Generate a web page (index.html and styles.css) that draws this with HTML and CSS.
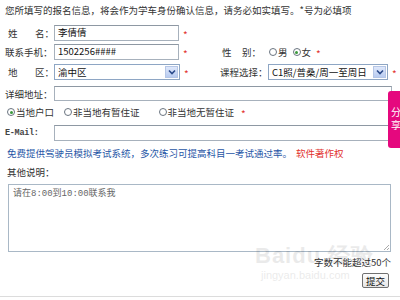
FILE: index.html
```html
<!DOCTYPE html>
<html>
<head>
<meta charset="utf-8">
<link rel="stylesheet" href="styles.css">
</head>
<body>
<div class="page">
  <div class="intro">您所填写的报名信息，将会作为学车身份确认信息，请务必如实填写。*号为必填项</div>

  <div class="row r1">
    <div class="cell left">
      <label class="lbl spread"><span>姓</span><span>名：</span></label>
      <div class="input w125">李倩倩</div><span class="star">*</span>
    </div>
  </div>

  <div class="row r2">
    <div class="cell left">
      <label class="lbl">联系手机：</label>
      <div class="input w125">1502256####</div><span class="star">*</span>
    </div>
    <div class="cell right">
      <label class="lbl spread"><span>性</span><span>别：</span></label>
      <span class="radio"></span><span class="rtxt">男</span>
      <span class="radio on"></span><span class="rtxt">女</span><span class="star">*</span>
    </div>
  </div>

  <div class="row r3">
    <div class="cell left">
      <label class="lbl spread"><span>地</span><span>区：</span></label>
      <div class="select w126"><span class="val">渝中区</span><span class="arrow"><svg width="8" height="6" viewBox="0 0 8 6"><path d="M1 1.5 L4 4.5 L7 1.5" fill="none" stroke="#2b4a8a" stroke-width="1.6"/></svg></span></div><span class="star">*</span>
    </div>
    <div class="cell right">
      <label class="lbl">课程选择：</label>
      <div class="select w120"><span class="val">C1照/普桑/周一至周日</span><span class="arrow"><svg width="8" height="6" viewBox="0 0 8 6"><path d="M1 1.5 L4 4.5 L7 1.5" fill="none" stroke="#2b4a8a" stroke-width="1.6"/></svg></span></div><span class="star">*</span>
    </div>
  </div>

  <div class="row r4">
    <label class="lbl">详细地址：</label>
    <div class="input wide"></div>
  </div>

  <div class="row r5">
    <span class="radio on"></span><span class="rtxt g1">当地户口</span>
    <span class="radio"></span><span class="rtxt g2">非当地有暂住证</span>
    <span class="radio"></span><span class="rtxt">非当地无暂住证</span><span class="star">*</span>
  </div>

  <div class="row r6">
    <label class="lbl mono">E-Mail:</label>
    <div class="input wide"></div>
  </div>

  <div class="row r7">
    <span class="blue">免费提供驾驶员模拟考试系统，多次练习可提高科目一考试通过率。</span><span class="red">软件著作权</span>
  </div>

  <div class="row r8">其他说明：</div>

  <div class="textarea">请在8:00到10:00联系我<span class="grip"></span></div>

  <div class="count">字数不能超过50个</div>

  <div class="btnrow"><button class="btn">提交</button></div>

  <div class="bottomline"></div>

  <div class="share">分<br>享</div>
  <div class="watermark"><span class="wm1">Bai<span class="du">du</span> 经验</span><span class="wm2">jingyan.baidu.com</span></div>
</div>
</body>
</html>
```

FILE: styles.css
```css
html, body {
  margin: 0;
  padding: 0;
  background: #fff;
}
.page {
  position: relative;
  width: 400px;
  height: 300px;
  overflow: hidden;
  font-family: "Noto Sans CJK SC", "Liberation Sans", sans-serif;
  font-size: 9.5px;
  color: #333;
  box-sizing: border-box;
  padding: 3px 0 0 5px;
}
.intro {
  height: 14px;
  line-height: 14px;
  white-space: nowrap;
}
.row {
  display: flex;
  align-items: center;
  white-space: nowrap;
}
.r1 { margin-top: 8px; height: 16px; }
.r2 { margin-top: 3px; height: 16px; }
.r3 { margin-top: 4px; height: 16px; }
.r4 { margin-top: 6px; height: 15px; }
.r5 { margin-top: 4px; height: 14px; padding-left: 2px; }
.r6 { margin-top: 6px; height: 16px; }
.r7 { margin-top: 5px; height: 14px; padding-left: 2px; }
.r8 { margin-top: 5px; height: 14px; padding-left: 2px; }
.cell {
  display: flex;
  align-items: center;
  height: 100%;
}
.left { width: 215px; }
.lbl {
  display: inline-block;
  width: 49px;
  line-height: 14px;
}
.spread {
  display: flex;
  justify-content: space-between;
  padding-left: 3px;
  width: 46px;
}
.right .lbl { width: 48px; }
.right .spread { width: 39px; padding-left: 2px; margin-right: 8px; }
.mono {
  font-family: "Liberation Mono", monospace;
  font-size: 8.5px;
  font-weight: bold;
  color: #444;
  letter-spacing: -0.3px;
}
.input {
  box-sizing: border-box;
  height: 100%;
  border: 1px solid #a7b1bc;
  border-top-color: #8e98a3;
  background: #fff;
  color: #111;
  line-height: 13px;
  padding-left: 3px;
  font-size: 9.5px;
}
.w125 { width: 125px; }
.wide { width: 338px; }
.select {
  box-sizing: border-box;
  height: 100%;
  border: 1px solid #8ea6c4;
  display: flex;
  align-items: center;
  justify-content: space-between;
  background: #fff;
  color: #111;
  padding-left: 3px;
}
.w126 { width: 126px; }
.w120 { width: 120px; }
.select .val { line-height: 13px; }
.arrow {
  width: 13px;
  height: 12px;
  margin-right: 1px;
  background: linear-gradient(#dfe8fb, #b8cbf0);
  border: 1px solid #b5c6e6;
  box-sizing: border-box;
  display: flex;
  align-items: center;
  justify-content: center;
}
.star {
  color: #e2332f;
  font-size: 10px;
  margin-left: 4px;
  line-height: 10px;
  padding-top: 3px;
}
.radio {
  display: inline-block;
  box-sizing: border-box;
  width: 8px;
  height: 8px;
  border: 1px solid #6a7480;
  border-radius: 50%;
  margin-right: 1px;
  position: relative;
  background: #fff;
}
.radio.on::after {
  content: "";
  position: absolute;
  left: 1.5px;
  top: 1.5px;
  width: 3px;
  height: 3px;
  border-radius: 50%;
  background: #3c9a3c;
}
.rtxt { margin-right: 5px; }
.right .rtxt + .star { margin-left: 0; }
.g1 { margin-right: 10px; }
.g2 { margin-right: 19px; }
.r5 .star { margin-left: 2px; }
.blue { color: #1f56a6; }
.red { color: #e2332f; margin-left: 4px; }
.textarea {
  position: relative;
  box-sizing: border-box;
  margin: 5px 0 0 3px;
  width: 383px;
  height: 68px;
  border: 1px solid #a9b8c6;
  padding: 3px 0 0 4px;
  font-family: "Liberation Mono", "Noto Sans CJK SC", monospace;
  font-size: 9px;
  color: #666;
  line-height: 12px;
}
.grip {
  position: absolute;
  right: 1px;
  bottom: 1px;
  width: 5px;
  height: 5px;
  background: linear-gradient(135deg, transparent 45%, #aaa 45%, #aaa 55%, transparent 55%, transparent 75%, #aaa 75%, #aaa 85%, transparent 85%);
}
.count {
  margin-top: 3px;
  height: 14px;
  line-height: 14px;
  width: 386px;
  text-align: right;
  color: #333;
}
.btnrow {
  margin-top: 4px;
  width: 384px;
  display: flex;
  justify-content: flex-end;
}
.btn {
  box-sizing: border-box;
  height: 15px;
  width: 27px;
  padding: 0;
  font-family: "Noto Sans CJK SC", sans-serif;
  font-size: 9.5px;
  line-height: 12px;
  color: #111;
  background: linear-gradient(#fdfdfd, #e6e6e6);
  border: 1px solid #707070;
  border-radius: 2px;
}
.bottomline {
  position: absolute;
  left: 0;
  right: 0;
  top: 296px;
  height: 1px;
  background: #dcdcdc;
}
.share {
  position: absolute;
  left: 388px;
  top: 91px;
  width: 16px;
  height: 57px;
  background: #e5087e;
  border-radius: 3px 0 0 3px;
  color: #fff;
  font-size: 10px;
  line-height: 13px;
  padding: 14px 0 0 3px;
  box-sizing: border-box;
}
.watermark {
  position: absolute;
  left: 255px;
  top: 243px;
  pointer-events: none;
  color: #000;
  opacity: 0.08;
}
.wm1 {
  display: block;
  font-family: "Liberation Sans", sans-serif;
  font-weight: bold;
  font-size: 22px;
  line-height: 26px;
  letter-spacing: 1px;
}
.wm2 {
  display: block;
  font-family: "Liberation Sans", sans-serif;
  font-size: 11px;
  margin-left: 6px;
}
```
